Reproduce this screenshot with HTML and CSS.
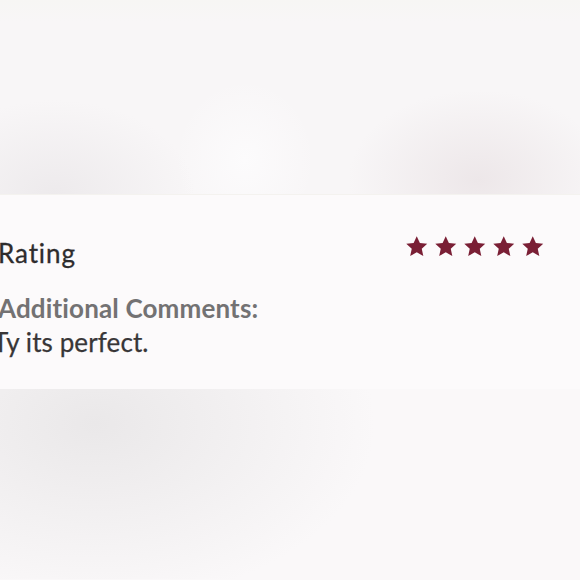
FILE: index.html
```html
<!DOCTYPE html>
<html>
<head>
<meta charset="utf-8">
<link rel="stylesheet" href="styles.css">
</head>
<body>
<div class="page">
  <div class="backdrop backdrop-top"></div>
  <section class="card">
    <div class="rating-row">
      <h2 class="rating-label">Rating</h2>
      <div class="stars" aria-label="5 out of 5 stars">
        <svg class="star" viewBox="0 0 24 24"><path d="M12 1.2l3.2 6.9 7.5.8-5.6 5.1 1.6 7.5L12 17.7l-6.7 3.8 1.6-7.5-5.6-5.1 7.5-.8z"/></svg>
        <svg class="star" viewBox="0 0 24 24"><path d="M12 1.2l3.2 6.9 7.5.8-5.6 5.1 1.6 7.5L12 17.7l-6.7 3.8 1.6-7.5-5.6-5.1 7.5-.8z"/></svg>
        <svg class="star" viewBox="0 0 24 24"><path d="M12 1.2l3.2 6.9 7.5.8-5.6 5.1 1.6 7.5L12 17.7l-6.7 3.8 1.6-7.5-5.6-5.1 7.5-.8z"/></svg>
        <svg class="star" viewBox="0 0 24 24"><path d="M12 1.2l3.2 6.9 7.5.8-5.6 5.1 1.6 7.5L12 17.7l-6.7 3.8 1.6-7.5-5.6-5.1 7.5-.8z"/></svg>
        <svg class="star" viewBox="0 0 24 24"><path d="M12 1.2l3.2 6.9 7.5.8-5.6 5.1 1.6 7.5L12 17.7l-6.7 3.8 1.6-7.5-5.6-5.1 7.5-.8z"/></svg>
      </div>
    </div>
    <p class="comments-label">Additional Comments:</p>
    <p class="comments-text">Ty its perfect.</p>
  </section>
  <div class="backdrop backdrop-bottom"></div>
</div>
</body>
</html>
```

FILE: styles.css
```css
* { box-sizing: border-box; }
html, body {
  margin: 0;
  padding: 0;
  background: #faf8f9;
}
body {
  width: 580px;
  height: 580px;
  overflow: hidden;
  font-family: "Lato", "Open Sans", sans-serif;
  font-variant-ligatures: none;
  -webkit-font-smoothing: antialiased;
}
.page {
  display: flex;
  flex-direction: column;
  width: 580px;
  height: 580px;
}
.backdrop-top {
  height: 195px;
  background:
    linear-gradient(to bottom, #f7f6f4 0px, rgba(247,246,244,0) 22px),
    radial-gradient(ellipse 130px 90px at 478px 180px, #ede7e9 0%, rgba(237,231,233,0) 100%),
    radial-gradient(ellipse 140px 95px at 55px 195px, #edeaec 0%, rgba(237,234,236,0) 100%),
    radial-gradient(ellipse 70px 80px at 245px 160px, #fcfbfc 0%, rgba(252,251,252,0) 100%),
    #f8f6f7;
  border-bottom: 1px solid #f4f2ef;
}
.card {
  height: 194px;
  background: #fcfafb;
  padding: 42px 36px 0 0;
  margin-left: -2px;
}
.rating-row {
  display: flex;
  justify-content: space-between;
  align-items: flex-start;
}
.rating-label {
  margin: 0;
  font-size: 26px;
  line-height: 32px;
  font-weight: 400;
  letter-spacing: 0.9px;
  color: #2e2c2d;
  -webkit-text-stroke: 0.3px #2e2c2d;
}
.stars {
  display: flex;
  gap: 5.5px;
  margin-top: -2px;
}
.star {
  width: 23.5px;
  height: 23.5px;
  fill: #7a1f35;
}
.comments-label {
  margin: 22px 0 0;
  font-size: 26px;
  line-height: 34px;
  font-weight: 700;
  letter-spacing: 0.15px;
  color: #737273;
}
.comments-text {
  margin: 0;
  font-size: 26px;
  line-height: 34px;
  font-weight: 400;
  text-indent: -5px;
  letter-spacing: 0.1px;
  color: #383637;
  -webkit-text-stroke: 0.25px #383637;
}
.backdrop-bottom {
  flex: 1;
  background:
    radial-gradient(ellipse 280px 180px at 95px 425px, #eae8e9 0%, rgba(234,232,233,0) 100%),
    #faf8f9;
  background-position: 0 -390px;
  background-size: 580px 580px;
  background-repeat: no-repeat;
  background-color: #faf8f9;
}
```
